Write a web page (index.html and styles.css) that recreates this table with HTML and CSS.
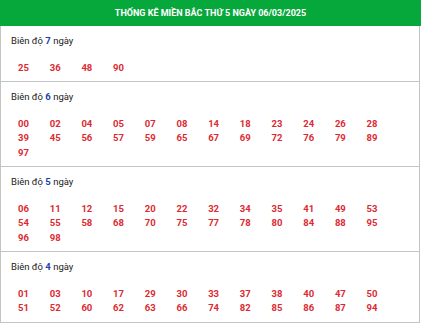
FILE: index.html
```html
<!DOCTYPE html>
<html lang="vi">
<head>
<meta charset="utf-8">
<link rel="stylesheet" href="styles.css">
</head>
<body>
<div class="box">
  <div class="head"><span class="head-text">THỐNG KÊ MIỀN BẮC THỨ 5 NGÀY 06/03/2025</span></div>
  <div class="sec first">
    <div class="label">Biên độ <b>7</b> ngày</div>
    <div class="nums">
      <span>25</span><span>36</span><span>48</span><span>90</span>
    </div>
  </div>
  <div class="sec">
    <div class="label">Biên độ <b>6</b> ngày</div>
    <div class="nums">
      <span>00</span><span>02</span><span>04</span><span>05</span><span>07</span><span>08</span><span>14</span><span>18</span><span>23</span><span>24</span><span>26</span><span>28</span>
      <span>39</span><span>45</span><span>56</span><span>57</span><span>59</span><span>65</span><span>67</span><span>69</span><span>72</span><span>76</span><span>79</span><span>89</span>
      <span>97</span>
    </div>
  </div>
  <div class="sec">
    <div class="label">Biên độ <b>5</b> ngày</div>
    <div class="nums">
      <span>06</span><span>11</span><span>12</span><span>15</span><span>20</span><span>22</span><span>32</span><span>34</span><span>35</span><span>41</span><span>49</span><span>53</span>
      <span>54</span><span>55</span><span>58</span><span>68</span><span>70</span><span>75</span><span>77</span><span>78</span><span>80</span><span>84</span><span>88</span><span>95</span>
      <span>96</span><span>98</span>
    </div>
  </div>
  <div class="sec">
    <div class="label">Biên độ <b>4</b> ngày</div>
    <div class="nums">
      <span>01</span><span>03</span><span>10</span><span>17</span><span>29</span><span>30</span><span>33</span><span>37</span><span>38</span><span>40</span><span>47</span><span>50</span>
      <span>51</span><span>52</span><span>60</span><span>62</span><span>63</span><span>66</span><span>74</span><span>82</span><span>85</span><span>86</span><span>87</span><span>94</span>
    </div>
  </div>
</div>
</body>
</html>
```

FILE: styles.css
```css
html, body {
  margin: 0;
  padding: 0;
  background: #fff;
}
body {
  font-family: Roboto, "Liberation Sans", Arial, sans-serif;
  width: 421px;
}
.box {
  width: 421px;
}
.head {
  background: #06a83b;
  color: #fff;
  height: 26px;
  line-height: 26px;
  text-align: center;
  font-size: 9px;
  font-weight: bold;
}
.head-text {
  display: inline-block;
}
.sec {
  width: 418px;
  border-left: 1px solid #c4c4c4;
  border-right: 1px solid #c4c4c4;
  border-bottom: 1px solid #c4c4c4;
  padding: 7px 0 6px 0;
}
.sec.first {
  padding-top: 7px;
}
.label {
  font-size: 9.5px;
  line-height: 15px;
  color: #222;
  padding-left: 10px;
}
.label b {
  color: #1b3fae;
  font-weight: bold;
}
.nums {
  margin-top: 12.5px;
  padding-left: 17px;
  display: grid;
  grid-template-columns: repeat(12, 31.7px);
  font-size: 9.5px;
  line-height: 14.5px;
  font-weight: bold;
  color: #dc2a33;
}
```
